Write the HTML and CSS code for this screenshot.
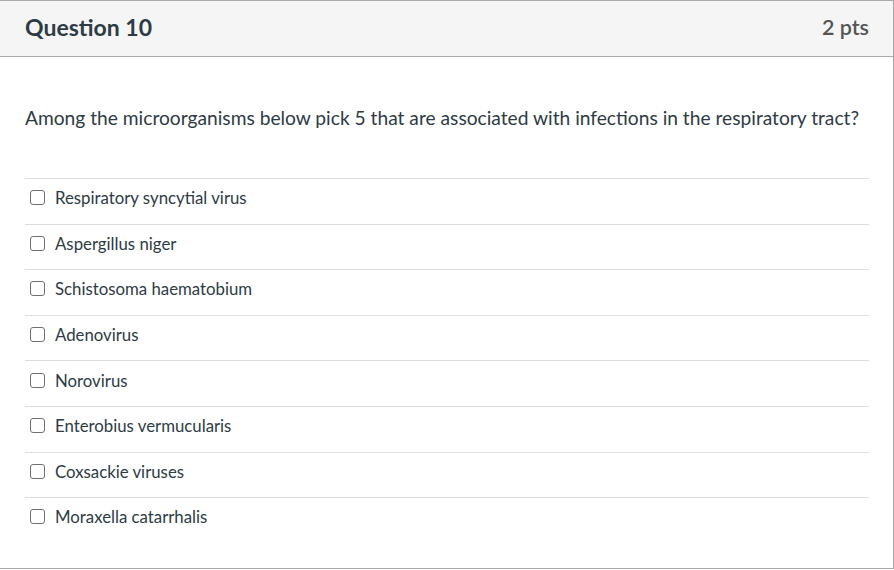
FILE: index.html
```html
<!DOCTYPE html>
<html>
<head>
<meta charset="utf-8">
<link rel="stylesheet" href="styles.css">
</head>
<body>
<div class="card">
  <div class="header">
    <h2 class="title">Question 10</h2>
    <span class="pts">2 pts</span>
  </div>
  <div class="body">
    <p class="question">Among the microorganisms below pick 5 that are associated with infections in the respiratory tract?</p>
    <div class="answers">
      <label class="answer"><span class="box"></span><span>Respiratory syncytial virus</span></label>
      <label class="answer"><span class="box"></span><span>Aspergillus niger</span></label>
      <label class="answer"><span class="box"></span><span>Schistosoma haematobium</span></label>
      <label class="answer"><span class="box"></span><span>Adenovirus</span></label>
      <label class="answer"><span class="box"></span><span>Norovirus</span></label>
      <label class="answer"><span class="box"></span><span>Enterobius vermucularis</span></label>
      <label class="answer"><span class="box"></span><span>Coxsackie viruses</span></label>
      <label class="answer"><span class="box"></span><span>Moraxella catarrhalis</span></label>
    </div>
  </div>
</div>
</body>
</html>
```
FILE: styles.css
```css
* { box-sizing: border-box; }
html, body { margin: 0; padding: 0; background: #fff; }
body {
  font-family: Lato, "Liberation Sans", sans-serif;
  color: #2d3b45;
}
.card {
  width: 895px;
  height: 569px;
  margin-left: -1px;
  border: 1px solid #aaaaaa;
  background: #fff;
}
.header {
  height: 56px;
  background: #f5f5f5;
  border-bottom: 1px solid #aaaaaa;
  display: flex;
  align-items: center;
  justify-content: space-between;
  padding: 0 24px 4px 25px;
}
.title {
  margin: 0;
  font-size: 23px;
  font-weight: 700;
  color: #2d3b45;
}
.pts {
  font-size: 21.5px;
  font-weight: 600;
  color: #555555;
}
.body {
  padding: 0 24px 0 25px;
}
.question {
  margin: 0;
  padding-top: 49px;
  height: 121px;
  font-size: 19.2px;
  line-height: 24px;
}
.answers {
  display: flex;
  flex-direction: column;
}
.answer {
  display: flex;
  align-items: center;
  gap: 10px;
  height: 45.6px;
  border-top: 1px solid #dddddd;
  padding: 0 0 7px 5px;
  font-size: 16.8px;
  color: #2d3b45;
}
.box {
  width: 15px;
  height: 15px;
  border: 1.5px solid #707070;
  border-radius: 3px;
  background: #fff;
  flex: none;
}
```
